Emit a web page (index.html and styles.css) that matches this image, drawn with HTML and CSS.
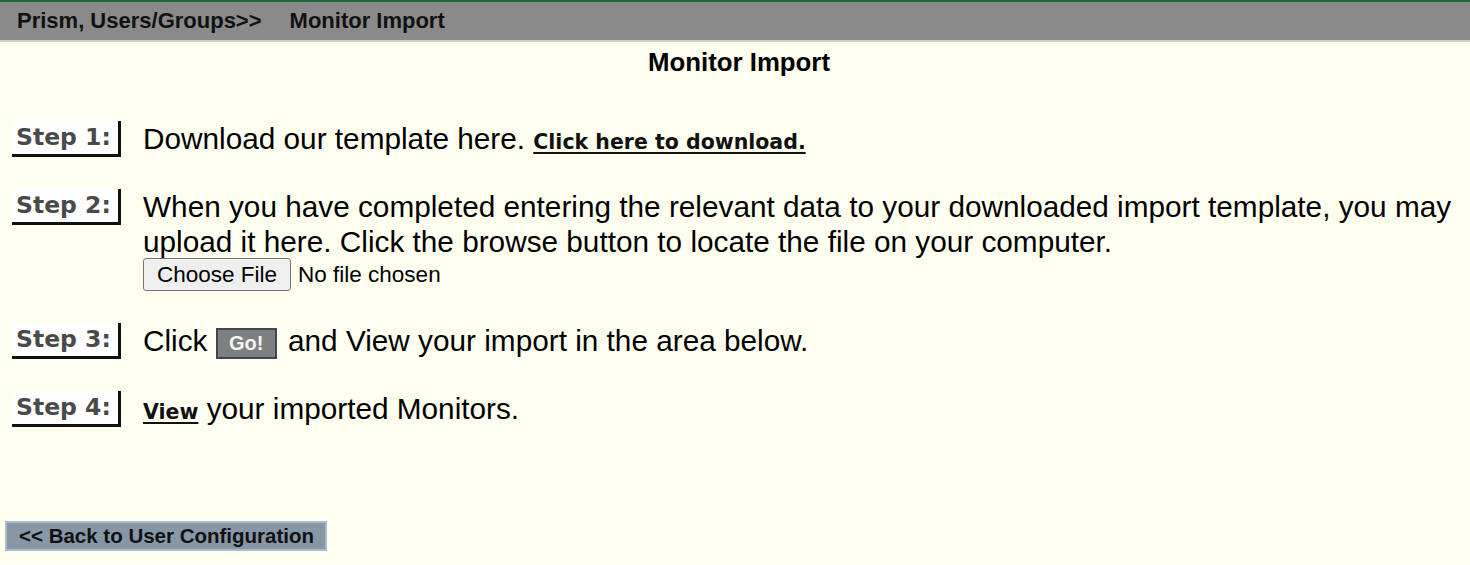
FILE: index.html
```html
<!DOCTYPE html>
<html>
<head>
<meta charset="utf-8">
<title>Monitor Import</title>
<link rel="stylesheet" href="styles.css">
</head>
<body>
<div class="topbar">
  <span class="crumb">Prism, Users/Groups&gt;&gt;</span>
  <span class="crumb">Monitor Import</span>
</div>
<h1 class="title">Monitor Import</h1>
<div class="steps">
  <div class="step">
    <div class="label">Step 1:</div>
    <div class="text">Download our template here. <a class="vlink" href="#">Click here to download.</a></div>
  </div>
  <div class="step">
    <div class="label">Step 2:</div>
    <div class="text">When you have completed entering the relevant data to your downloaded import template, you may upload it here. Click the browse button to locate the file on your computer.
      <div class="file-row"><input class="file" type="file"></div>
    </div>
  </div>
  <div class="step">
    <div class="label">Step 3:</div>
    <div class="text">Click <button class="go" type="button">Go!</button> and View your import in the area below.</div>
  </div>
  <div class="step">
    <div class="label">Step 4:</div>
    <div class="text"><a class="vlink" href="#">View</a> your imported Monitors.</div>
  </div>
</div>
<div class="back-row">
  <a class="back" href="#">&lt;&lt; Back to User Configuration</a>
</div>
</body>
</html>
```

FILE: styles.css
```css
html, body {
  margin: 0;
  padding: 0;
  background: #fffff0;
  font-family: "Liberation Sans", Arial, sans-serif;
  color: #000;
}

.topbar {
  display: flex;
  align-items: center;
  gap: 28px;
  height: 38px;
  padding-left: 17px;
  background: #8a8a8a;
  border-top: 2px solid #1f6b3d;
  border-bottom: 2px solid #cfcfc6;
}

.crumb {
  font-weight: bold;
  font-size: 22px;
  color: #111;
}

.title {
  margin: 5px 0 0;
  padding-left: 8px;
  text-align: center;
  font-size: 25.8px;
  line-height: 30px;
  font-weight: bold;
}

.steps {
  display: flex;
  flex-direction: column;
  gap: 32px;
  padding: 44px 12px 0;
}

.step {
  display: flex;
  align-items: flex-start;
  gap: 22px;
}

.label {
  flex: none;
  box-sizing: border-box;
  width: 109px;
  height: 36px;
  padding-left: 4px;
  background: #ffffff;
  border-right: 3px solid #111;
  border-bottom: 3px solid #111;
  font-family: "DejaVu Sans", Verdana, sans-serif;
  font-weight: bold;
  font-size: 23.5px;
  line-height: 32px;
  color: #4a4a4a;
  white-space: nowrap;
}

.text {
  font-size: 29.75px;
  line-height: 35px;
  color: #000;
}

.vlink {
  font-family: "DejaVu Sans", Verdana, sans-serif;
  font-weight: bold;
  font-size: 20.5px;
  line-height: 20px;
  color: #111;
  text-decoration: underline;
  text-underline-offset: 3px;
}

.file-row {
  display: flex;
  line-height: 33px;
  margin-top: -1px;
}

.file {
  font-family: "Liberation Sans", Arial, sans-serif;
  font-size: 22.5px;
  color: #000;
}

.file::file-selector-button {
  font: inherit;
  height: 33px;
  padding: 0 13px;
  margin-right: 7px;
  background: #efefef;
  border: 1px solid #767676;
  border-radius: 3px;
  color: #000;
}

.go {
  display: inline-block;
  vertical-align: middle;
  box-sizing: border-box;
  width: 61px;
  height: 31px;
  margin: 0 3px 0 0;
  padding: 0;
  background: #7f7f7f;
  border: 2px solid #3b4856;
  color: #f4f4f4;
  font-family: "Liberation Sans", Arial, sans-serif;
  font-weight: bold;
  font-size: 20px;
  line-height: 27px;
}

.back-row {
  padding: 94px 0 0 5px;
}

.back {
  display: inline-block;
  box-sizing: border-box;
  width: 322px;
  height: 30px;
  padding-left: 12px;
  background: #8797a6;
  border: 2px solid #a9bccd;
  color: #111;
  font-weight: bold;
  font-size: 20.5px;
  line-height: 26px;
  text-decoration: none;
}
```
